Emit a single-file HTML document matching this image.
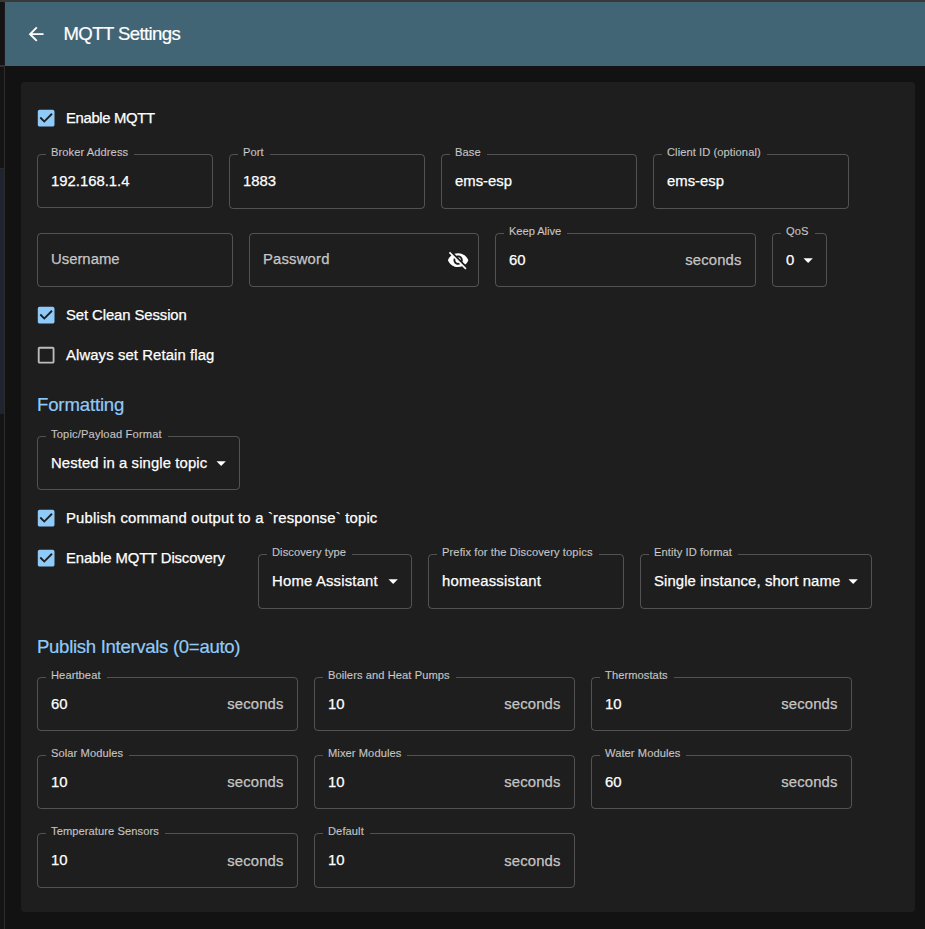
<!DOCTYPE html>
<html><head><meta charset="utf-8">
<style>
*{box-sizing:border-box;margin:0;padding:0}
html,body{width:925px;height:929px;overflow:hidden;background:#121212;font-family:"Liberation Sans",sans-serif;color:#fff}
.abs{position:absolute}
#topband{left:0;top:0;width:925px;height:2px;background:#393939}
#drawer{left:0;top:2px;width:4px;height:927px;background:#141414}
#drawersel{left:0;top:169px;width:4px;height:245px;background:#1f2430}
#drawerhl1{left:0;top:65px;width:5px;height:2px;background:#303030}
#drawerhl2{left:0;top:168px;width:4px;height:1px;background:#2a2a2a}
#drawerline{left:4px;top:66px;width:1px;height:863px;background:#2c2c2c}
#drawerline0{left:4px;top:2px;width:1px;height:63px;background:#1b1b1b}
#appbar{left:5px;top:2px;width:920px;height:64px;background:#426575}
.title{-webkit-text-stroke:0.2px #fff;left:62.5px;top:22px;font-size:18.57px;line-height:24px;color:#fff;white-space:nowrap}
#paper{left:21px;top:82px;width:894px;height:830px;background:#1e1e1e;border-radius:4px}
.cbl{-webkit-text-stroke:0.25px #fff;position:absolute;font-size:14.86px;line-height:20px;white-space:nowrap;color:#fff}
.tf{position:absolute;border:1px solid rgba(255,255,255,0.23);border-radius:4px;height:54px}
.lab{-webkit-text-stroke:0.15px rgba(255,255,255,0.7);position:absolute;font-size:11.14px;line-height:14px;color:rgba(255,255,255,0.7);white-space:nowrap;background:#1e1e1e;padding:0 6px 0 5px}
.val{-webkit-text-stroke:0.25px #fff;position:absolute;font-size:14.86px;line-height:20px;color:#fff;white-space:nowrap}
.ph{-webkit-text-stroke:0.25px rgba(255,255,255,0.7);position:absolute;font-size:14.86px;line-height:20px;color:rgba(255,255,255,0.7);white-space:nowrap}
.sec{-webkit-text-stroke:0.25px rgba(255,255,255,0.7);position:absolute;font-size:14.86px;line-height:20px;color:rgba(255,255,255,0.7);white-space:nowrap}
.h6{-webkit-text-stroke:0.2px #90caf9;position:absolute;font-size:18.57px;line-height:24px;color:#90caf9;white-space:nowrap}
</style></head><body>
<div class="abs" id="topband"></div>
<div class="abs" id="drawer"></div>
<div class="abs" id="drawersel"></div>
<div class="abs" id="drawerhl1"></div>
<div class="abs" id="drawerhl2"></div>
<div class="abs" id="drawerline"></div>
<div class="abs" id="drawerline0"></div>
<div class="abs" id="appbar"></div>
<svg class="abs" style="left:25.1px;top:23.3px" width="22.29" height="22.29" viewBox="0 0 24 24"><path fill="#fff" d="M20 11H7.83l5.59-5.59L12 4l-8 8 8 8 1.41-1.41L7.83 13H20v-2z"/></svg>
<div class="title abs" style="left:63.5px;top:22px;letter-spacing:-0.6px">MQTT Settings</div>
<div class="abs" id="paper"></div>
<svg class="abs" style="left:34.9px;top:107.2px" width="22.29" height="22.29" viewBox="0 0 24 24"><path fill="#90caf9" d="M19 3H5c-1.11 0-2 .9-2 2v14c0 1.1.89 2 2 2h14c1.11 0 2-.9 2-2V5c0-1.1-.89-2-2-2zm-9 14l-5-5 1.41-1.41L10 14.17l7.59-7.59L19 8l-9 9z"/></svg>
<div class="cbl" style="left:66px;top:107.5px;letter-spacing:-0.35px">Enable MQTT</div>
<div class="tf" style="left:37px;top:154px;width:176px;height:54px"></div>
<div class="lab" style="left:46px;top:145px;letter-spacing:0.08px">Broker Address</div>
<div class="val" style="left:51px;top:170.6px">192.168.1.4</div>
<div class="tf" style="left:229px;top:154px;width:196px;height:55px"></div>
<div class="lab" style="left:238px;top:145px;letter-spacing:0.08px">Port</div>
<div class="val" style="left:243px;top:171.1px">1883</div>
<div class="tf" style="left:441px;top:154px;width:196px;height:55px"></div>
<div class="lab" style="left:450px;top:145px;letter-spacing:0.08px">Base</div>
<div class="val" style="left:455px;top:171.1px">ems-esp</div>
<div class="tf" style="left:653px;top:154px;width:196px;height:55px"></div>
<div class="lab" style="left:662px;top:145px;letter-spacing:0.08px">Client ID (optional)</div>
<div class="val" style="left:667px;top:171.1px">ems-esp</div>
<div class="tf" style="left:37px;top:233px;width:196px;height:54px"></div>
<div class="ph" style="left:51px;top:248.7px">Username</div>
<div class="tf" style="left:249px;top:233px;width:230px;height:54px"></div>
<div class="ph" style="left:263px;top:248.7px;letter-spacing:0.17px">Password</div>
<svg class="abs" style="left:447px;top:248.8px" width="22.29" height="22.29" viewBox="0 0 24 24"><path fill="#fff" d="M12 7c2.76 0 5 2.24 5 5 0 .65-.13 1.26-.36 1.83l2.92 2.92c1.51-1.26 2.7-2.89 3.43-4.75-1.73-4.39-6-7.5-11-7.5-1.4 0-2.74.25-3.98.7l2.16 2.16C10.74 7.13 11.35 7 12 7zM2 4.27l2.28 2.28.46.46C3.08 8.3 1.78 10.02 1 12c1.73 4.39 6 7.5 11 7.5 1.55 0 3.03-.3 4.38-.84l.42.42L19.73 22 21 20.73 3.27 3 2 4.27zM7.53 9.8l1.55 1.55c-.05.21-.08.43-.08.65 0 1.66 1.34 3 3 3 .22 0 .44-.03.65-.08l1.55 1.55c-.67.33-1.41.53-2.2.53-2.76 0-5-2.24-5-5 0-.79.2-1.53.53-2.2zm4.31-.78l3.15 3.15.02-.16c0-1.66-1.34-3-3-3l-.17.01z"/></svg>
<div class="tf" style="left:495px;top:233px;width:261px;height:54px"></div>
<div class="lab" style="left:504px;top:224px;letter-spacing:-0.05px">Keep Alive</div>
<div class="val" style="left:509px;top:249.6px">60</div>
<div class="sec" style="left:685.3px;top:250.29999999999998px;letter-spacing:0.12px">seconds</div>
<div class="tf" style="left:772px;top:233px;width:55px;height:54px"></div>
<div class="lab" style="left:781px;top:224px;letter-spacing:0.08px">QoS</div>
<div class="val" style="left:786px;top:249.6px">0</div>
<svg class="abs" style="left:797px;top:248.5px" width="22.29" height="22.29" viewBox="0 0 24 24"><path fill="#fff" d="M7 10l5 5 5-5z"/></svg>
<svg class="abs" style="left:34.9px;top:304.2px" width="22.29" height="22.29" viewBox="0 0 24 24"><path fill="#90caf9" d="M19 3H5c-1.11 0-2 .9-2 2v14c0 1.1.89 2 2 2h14c1.11 0 2-.9 2-2V5c0-1.1-.89-2-2-2zm-9 14l-5-5 1.41-1.41L10 14.17l7.59-7.59L19 8l-9 9z"/></svg>
<div class="cbl" style="left:66px;top:304.5px;letter-spacing:-0.09px">Set Clean Session</div>
<svg class="abs" style="left:34.9px;top:344.2px" width="22.29" height="22.29" viewBox="0 0 24 24"><path fill="rgba(255,255,255,0.7)" d="M19 5v14H5V5h14m0-2H5c-1.1 0-2 .9-2 2v14c0 1.1.9 2 2 2h14c1.1 0 2-.9 2-2V5c0-1.1-.9-2-2-2z"/></svg>
<div class="cbl" style="left:66px;top:344.5px;letter-spacing:0.1px">Always set Retain flag</div>
<div class="h6" style="left:37px;top:393.3px;letter-spacing:-0.15px">Formatting</div>
<div class="tf" style="left:37px;top:436px;width:203px;height:54px"></div>
<div class="lab" style="left:46px;top:427px;letter-spacing:0.16px">Topic/Payload Format</div>
<div class="val" style="left:51px;top:452.6px;letter-spacing:0.11px">Nested in a single topic</div>
<svg class="abs" style="left:210px;top:451.5px" width="22.29" height="22.29" viewBox="0 0 24 24"><path fill="#fff" d="M7 10l5 5 5-5z"/></svg>
<svg class="abs" style="left:34.9px;top:507.2px" width="22.29" height="22.29" viewBox="0 0 24 24"><path fill="#90caf9" d="M19 3H5c-1.11 0-2 .9-2 2v14c0 1.1.89 2 2 2h14c1.11 0 2-.9 2-2V5c0-1.1-.89-2-2-2zm-9 14l-5-5 1.41-1.41L10 14.17l7.59-7.59L19 8l-9 9z"/></svg>
<div class="cbl" style="left:66px;top:507.5px;letter-spacing:0.19px">Publish command output to a `response` topic</div>
<svg class="abs" style="left:34.9px;top:547.2px" width="22.29" height="22.29" viewBox="0 0 24 24"><path fill="#90caf9" d="M19 3H5c-1.11 0-2 .9-2 2v14c0 1.1.89 2 2 2h14c1.11 0 2-.9 2-2V5c0-1.1-.89-2-2-2zm-9 14l-5-5 1.41-1.41L10 14.17l7.59-7.59L19 8l-9 9z"/></svg>
<div class="cbl" style="left:66px;top:547.5px;letter-spacing:-0.13px">Enable MQTT Discovery</div>
<div class="tf" style="left:258px;top:554px;width:154px;height:55px"></div>
<div class="lab" style="left:267px;top:545px;letter-spacing:0.08px">Discovery type</div>
<div class="val" style="left:272px;top:571.1px;letter-spacing:0.19px">Home Assistant</div>
<svg class="abs" style="left:382px;top:569.5px" width="22.29" height="22.29" viewBox="0 0 24 24"><path fill="#fff" d="M7 10l5 5 5-5z"/></svg>
<div class="tf" style="left:428px;top:554px;width:196px;height:55px"></div>
<div class="lab" style="left:437px;top:545px;letter-spacing:0.11px">Prefix for the Discovery topics</div>
<div class="val" style="left:442px;top:571.1px;letter-spacing:0.25px">homeassistant</div>
<div class="tf" style="left:640px;top:554px;width:232px;height:55px"></div>
<div class="lab" style="left:649px;top:545px;letter-spacing:0.08px">Entity ID format</div>
<div class="val" style="left:654px;top:571.1px;letter-spacing:0.11px">Single instance, short name</div>
<svg class="abs" style="left:842px;top:569.5px" width="22.29" height="22.29" viewBox="0 0 24 24"><path fill="#fff" d="M7 10l5 5 5-5z"/></svg>
<div class="h6" style="left:37px;top:635.3px;letter-spacing:-0.3px">Publish Intervals (0=auto)</div>
<div class="tf" style="left:37px;top:677px;width:261px;height:54px"></div>
<div class="lab" style="left:46px;top:668px;letter-spacing:0.08px">Heartbeat</div>
<div class="val" style="left:51px;top:693.6px">60</div>
<div class="sec" style="left:227.3px;top:694.3000000000001px;letter-spacing:0.12px">seconds</div>
<div class="tf" style="left:314px;top:677px;width:261px;height:54px"></div>
<div class="lab" style="left:323px;top:668px;letter-spacing:0.08px">Boilers and Heat Pumps</div>
<div class="val" style="left:328px;top:693.6px">10</div>
<div class="sec" style="left:504.3px;top:694.3000000000001px;letter-spacing:0.12px">seconds</div>
<div class="tf" style="left:591px;top:677px;width:261px;height:54px"></div>
<div class="lab" style="left:600px;top:668px;letter-spacing:0.08px">Thermostats</div>
<div class="val" style="left:605px;top:693.6px">10</div>
<div class="sec" style="left:781.3px;top:694.3000000000001px;letter-spacing:0.12px">seconds</div>
<div class="tf" style="left:37px;top:755px;width:261px;height:54px"></div>
<div class="lab" style="left:46px;top:746px;letter-spacing:0.08px">Solar Modules</div>
<div class="val" style="left:51px;top:771.6px">10</div>
<div class="sec" style="left:227.3px;top:772.3000000000001px;letter-spacing:0.12px">seconds</div>
<div class="tf" style="left:314px;top:755px;width:261px;height:54px"></div>
<div class="lab" style="left:323px;top:746px;letter-spacing:0.08px">Mixer Modules</div>
<div class="val" style="left:328px;top:771.6px">10</div>
<div class="sec" style="left:504.3px;top:772.3000000000001px;letter-spacing:0.12px">seconds</div>
<div class="tf" style="left:591px;top:755px;width:261px;height:54px"></div>
<div class="lab" style="left:600px;top:746px;letter-spacing:0.08px">Water Modules</div>
<div class="val" style="left:605px;top:771.6px">60</div>
<div class="sec" style="left:781.3px;top:772.3000000000001px;letter-spacing:0.12px">seconds</div>
<div class="tf" style="left:37px;top:833px;width:261px;height:55px"></div>
<div class="lab" style="left:46px;top:824px;letter-spacing:0.08px">Temperature Sensors</div>
<div class="val" style="left:51px;top:850.1px">10</div>
<div class="sec" style="left:227.3px;top:850.8000000000001px;letter-spacing:0.12px">seconds</div>
<div class="tf" style="left:314px;top:833px;width:261px;height:55px"></div>
<div class="lab" style="left:323px;top:824px;letter-spacing:0.08px">Default</div>
<div class="val" style="left:328px;top:850.1px">10</div>
<div class="sec" style="left:504.3px;top:850.8000000000001px;letter-spacing:0.12px">seconds</div>
</body></html>
